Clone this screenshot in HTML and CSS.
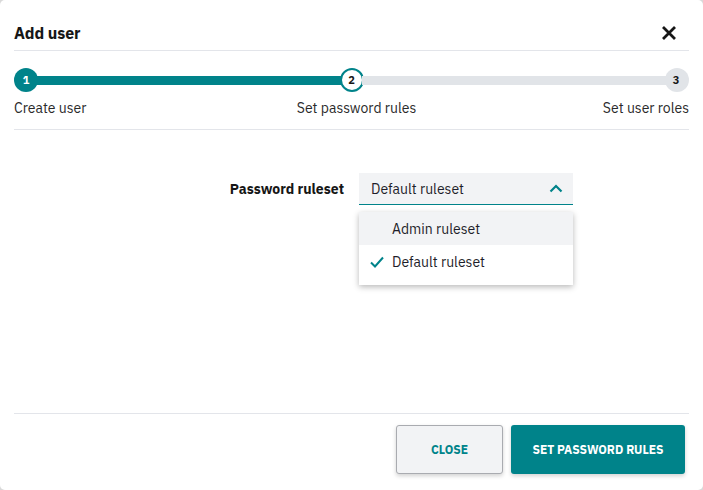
FILE: index.html
```html
<!DOCTYPE html>
<html lang="en">
<head>
<meta charset="utf-8">
<title>Add user</title>
<link rel="stylesheet" href="styles.css">
</head>
<body>
<div class="dialog">
  <header class="dialog-header">
    <h1 class="title">Add user</h1>
    <button class="close-x" aria-label="Close">
      <svg width="16" height="16" viewBox="0 0 16 16"><path d="M2 2 L14 14 M14 2 L2 14" stroke="#161616" stroke-width="2.8" stroke-linecap="butt"/></svg>
    </button>
  </header>

  <section class="stepper">
    <div class="track">
      <span class="dot done">1</span>
      <span class="seg seg-done"></span>
      <span class="dot current">2</span>
      <span class="seg"></span>
      <span class="dot todo">3</span>
    </div>
    <div class="labels">
      <span class="lbl lbl-start">Create user</span>
      <span class="lbl lbl-mid">Set password rules</span>
      <span class="lbl lbl-end">Set user roles</span>
    </div>
  </section>

  <main class="content">
    <div class="form-row">
      <label class="field-label">Password ruleset</label>
      <div class="select-wrap">
        <div class="select">
          <span class="select-value">Default ruleset</span>
          <svg class="chev" width="14" height="9" viewBox="0 0 14 9"><path d="M1.5 7.5 L7 2 L12.5 7.5" fill="none" stroke="#00838a" stroke-width="2.2"/></svg>
        </div>
        <ul class="menu">
          <li class="item hover"><span class="check"></span>Admin ruleset</li>
          <li class="item"><span class="check"><svg width="14" height="12" viewBox="0 0 14 12"><path d="M1 6.5 L5 10.5 L13 1.5" fill="none" stroke="#00838a" stroke-width="2"/></svg></span>Default ruleset</li>
        </ul>
      </div>
    </div>
  </main>

  <footer class="dialog-footer">
    <button class="btn btn-secondary">CLOSE</button>
    <button class="btn btn-primary">SET PASSWORD RULES</button>
  </footer>
</div>
</body>
</html>
```

FILE: styles.css
```css
* { box-sizing: border-box; }
html, body { margin: 0; padding: 0; }
body {
  background: #d9d9d9;
  font-family: "IBM Plex Sans", "Roboto", "Noto Sans", sans-serif;
  color: #161616;
}
.dialog {
  width: 703px;
  height: 490px;
  background: #fff;
  border-radius: 5px;
  padding: 0 14px;
  display: flex;
  flex-direction: column;
}
.dialog-header {
  height: 51px;
  padding-top: 16px;
  display: flex;
  align-items: center;
  justify-content: space-between;
  border-bottom: 1px solid #e3e5ea;
}
.title {
  margin: 0;
  font-size: 16px;
  font-weight: 700;
  letter-spacing: -0.1px;
}
.close-x {
  border: 0;
  background: none;
  padding: 0;
  margin-right: 12px;
  display: flex;
}
.stepper {
  padding-top: 17px;
  padding-bottom: 13px;
  border-bottom: 1px solid #e3e5ea;
}
.track {
  display: flex;
  align-items: center;
  height: 24px;
}
.dot {
  width: 24px;
  height: 24px;
  border-radius: 50%;
  display: flex;
  align-items: center;
  justify-content: center;
  font-size: 11px;
  font-weight: 700;
  flex: none;
}
.dot.done { background: #00838a; color: #fff; }
.dot.current { background: #fff; border: 2px solid #00838a; color: #161616; }
.dot.todo { background: #e1e4e8; color: #161616; padding-right: 2px; }
.seg {
  flex: 1;
  height: 9px;
  background: #e1e4e8;
  margin: 0 -2px;
}
.seg-done { background: #00838a; }
.labels {
  margin-top: 8px;
  display: grid;
  grid-template-columns: 1fr 1fr 1fr;
  font-size: 14px;
  line-height: 16px;
  color: #2a2a2a;
}
.lbl-start { justify-self: start; }
.lbl-mid { justify-self: center; padding-left: 10px; }
.lbl-end { justify-self: end; }
.content {
  flex: 1;
  border-bottom: 1px solid #e3e5ea;
  padding-top: 43px;
}
.form-row {
  display: flex;
  align-items: center;
  gap: 15px;
}
.field-label {
  width: 330px;
  text-align: right;
  font-size: 14px;
  font-weight: 700;
}
.select-wrap {
  position: relative;
  width: 214px;
}
.select {
  height: 32px;
  background: #f2f3f5;
  border-bottom: 1px solid #00838a;
  display: flex;
  align-items: center;
  justify-content: space-between;
  padding: 0 10px 0 12px;
  font-size: 14px;
  color: #1e1e2a;
}
.menu {
  position: absolute;
  top: 39px;
  left: 0;
  width: 214px;
  margin: 0;
  padding: 0 0 6px;
  list-style: none;
  background: #fff;
  box-shadow: 0 2px 6px rgba(0,0,0,0.28);
}
.item {
  height: 34px;
  display: flex;
  align-items: center;
  font-size: 14px;
  color: #1e1e2a;
}
.item.hover { background: #f2f3f5; height: 33px; }
.check {
  width: 33px;
  padding-left: 11px;
  display: flex;
  align-items: center;
}
.dialog-footer {
  height: 76px;
  padding: 11px 4px 0 0;
  display: flex;
  justify-content: flex-end;
  align-items: flex-start;
  gap: 8px;
}
.btn {
  height: 49px;
  border-radius: 3px;
  font-family: inherit;
  font-size: 12px;
  font-weight: 700;
  letter-spacing: 0;
  cursor: pointer;
}
.btn-secondary {
  width: 107px;
  background: #f2f3f5;
  color: #00838a;
  border: 1px solid #a9abb0;
  box-shadow: 0 2px 4px rgba(0,0,0,0.18);
}
.btn-primary {
  width: 174px;
  background: #00838a;
  color: #fff;
  border: 0;
  box-shadow: 0 2px 4px rgba(0,0,0,0.18);
}
```
